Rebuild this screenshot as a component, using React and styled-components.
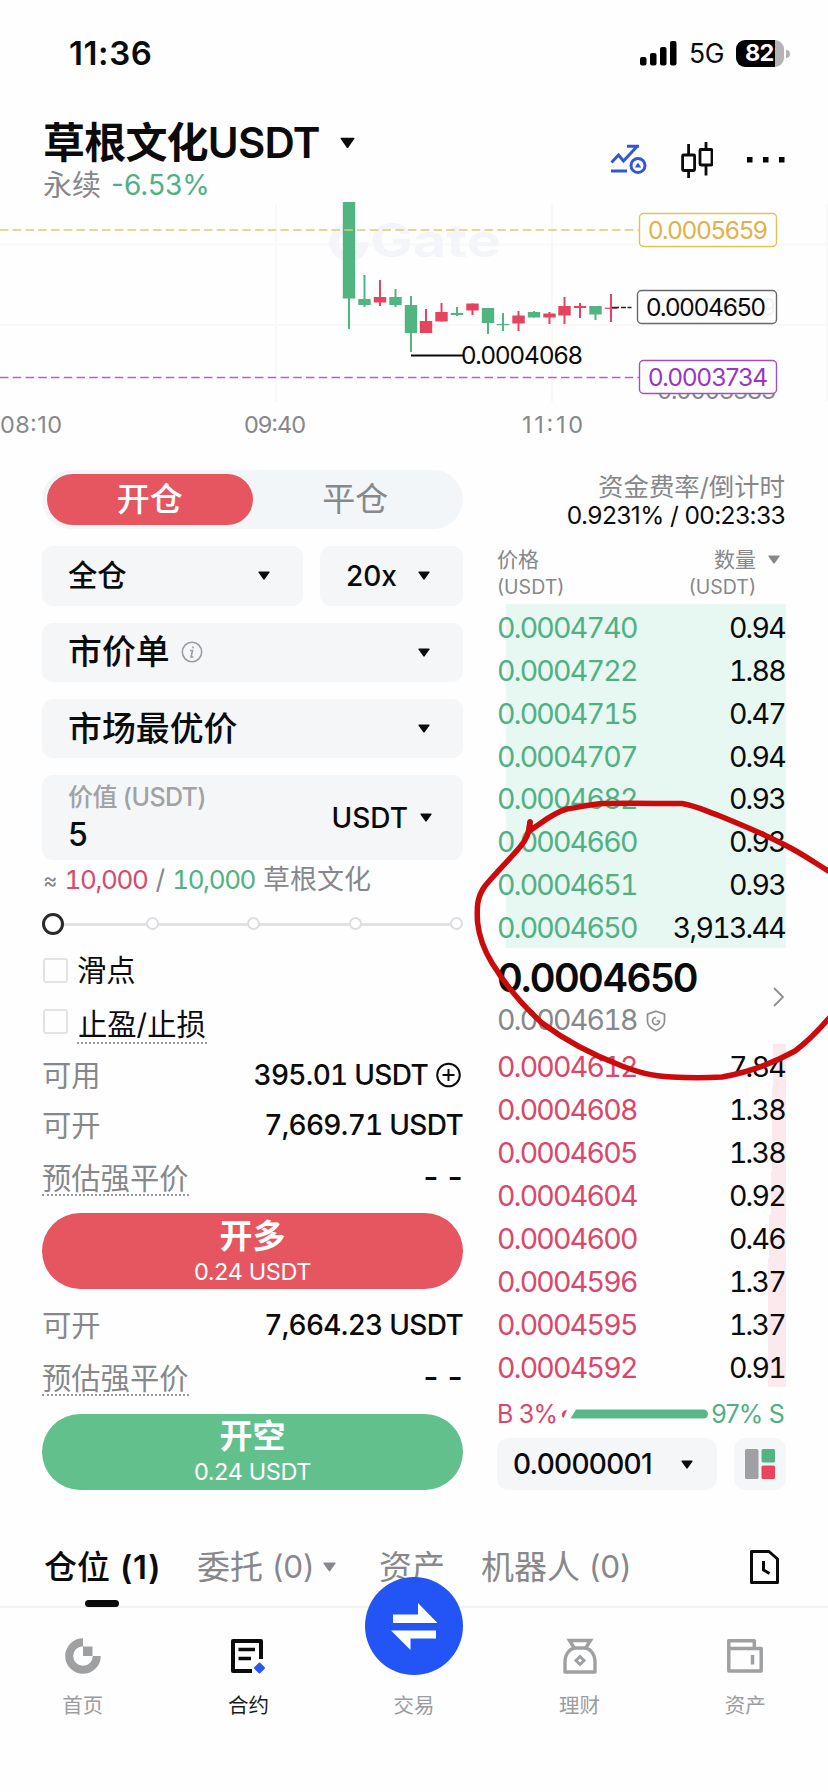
import React from "react";
import styled, { createGlobalStyle } from "styled-components";

const GlobalStyle = createGlobalStyle`
  * {
    box-sizing: border-box;
  }
  body {
    margin: 0;
    background: #fefefe;
    color: #0b0b0c;
    font-family: Inter, "Noto Sans CJK SC", sans-serif;
    line-height: 1;
    white-space: nowrap;
  }
  svg {
    display: block;
    flex: none;
  }
`;

const RED = "#d9486a";
const GREEN = "#4fb183";
const GRAY = "#86888b";

const Screen = styled.div`
  position: relative;
  width: 828px;
  height: 1792px;
  overflow: hidden;
  display: flex;
  flex-direction: column;
`;

const StatusBar = styled.div`
  height: 106px;
  padding: 0 38px 0 69px;
  display: flex;
  align-items: center;
  justify-content: space-between;

  .time {
    font-size: 33px;
    font-weight: 600;
    letter-spacing: 0.6px;
  }
  .right {
    display: flex;
    align-items: center;
    gap: 12px;
  }
  .network {
    font-size: 26.5px;
    letter-spacing: -0.5px;
  }
`;

const Battery = styled.div`
  position: relative;
  width: 48px;
  height: 27px;
  margin-right: 6px;
  padding-left: 9px;
  border-radius: 9px;
  display: flex;
  align-items: center;
  background: linear-gradient(to right, #000 82%, #b4b4b4 82%);
  color: #fff;
  font-size: 23.5px;
  font-weight: 700;
  letter-spacing: -0.8px;

  &::after {
    content: "";
    position: absolute;
    right: -6px;
    top: 10px;
    width: 4px;
    height: 8px;
    border-radius: 0 4px 4px 0;
    background: #b4b4b4;
  }
`;

const Header = styled.header`
  height: 96px;
  padding: 14px 43px 0;
  display: flex;
  justify-content: space-between;

  .title {
    display: flex;
    align-items: center;
    height: 46px;
    font-size: 42px;
    font-weight: 600;
    letter-spacing: -0.8px;
  }
  .title svg {
    margin-left: 20px;
  }
  .sub {
    display: flex;
    align-items: center;
    height: 38px;
    gap: 10px;
    font-size: 29px;
    color: ${GRAY};
  }
  .sub b {
    font-weight: 400;
    font-size: 28px;
    color: ${GREEN};
  }
  .actions {
    display: flex;
    align-items: center;
    height: 80px;
    gap: 34px;
  }
`;

const Chart = styled.div`
  height: 268px;

  text {
    font-family: Inter, sans-serif;
  }
`;

const Trade = styled.main`
  height: 1048px;
  padding: 0 42px;
  display: flex;
  justify-content: space-between;
`;

const OrderForm = styled.section`
  width: 421px;
`;

const Fields = styled.div`
  display: flex;
  flex-direction: column;
  gap: 17px;
`;

const Segment = styled.div`
  height: 59.3px;
  padding: 4px 5px;
  border-radius: 30px;
  background: #f3f6f8;
  display: flex;
`;

const SegmentItem = styled.div`
  flex: 1;
  border-radius: 26px;
  display: flex;
  align-items: center;
  justify-content: center;
  font-size: 33px;
  color: ${(p) => (p.$active ? "#fff" : GRAY)};
  background: ${(p) => (p.$active ? "#e55661" : "transparent")};
  font-weight: ${(p) => (p.$active ? 500 : 400)};
`;

const FieldRow = styled.div`
  display: flex;
  gap: 17px;
`;

const Select = styled.div`
  height: ${(p) => p.$height || 59.3}px;
  width: ${(p) => (p.$width ? `${p.$width}px` : "100%")};
  padding: 0 33px 0 26px;
  border-radius: 11px;
  background: #f4f6f8;
  display: flex;
  align-items: center;
  justify-content: space-between;
  font-size: ${(p) => p.$size || 33.9}px;
  font-weight: 500;

  .label {
    display: flex;
    align-items: center;
    gap: 11px;
  }
`;

const Amount = styled.div`
  display: flex;
  flex-direction: column;
  gap: 9px;
  font-size: 32px;

  small {
    font-size: 25px;
    color: #a0a2a4;
    letter-spacing: -0.6px;
  }
`;

const Unit = styled.div`
  display: flex;
  align-items: center;
  gap: 12px;
  font-size: 28px;
  margin: 0 -2px 0 0;
`;

const Estimate = styled.div`
  height: 38.5px;
  padding: 1px 0 0 1px;
  display: flex;
  align-items: center;
  font-size: 27px;
  color: ${GRAY};

  .approx {
    font-size: 22px;
  }
  .num {
    font-size: 26px;
    letter-spacing: -1.4px;
    font-variant-numeric: tabular-nums;
  }
  .red {
    color: ${RED};
    margin: 0 8px 0 7px;
  }
  .green {
    color: ${GREEN};
    margin: 0 8px 0 7px;
  }
`;

const Slider = styled.div`
  position: relative;
  height: 50.5px;
  display: flex;
  align-items: center;
  justify-content: space-between;

  &::before {
    content: "";
    position: absolute;
    left: 20px;
    right: 10px;
    top: 24px;
    height: 3px;
    background: #e1e2e4;
  }
`;

const Stop = styled.i`
  position: relative;
  width: ${(p) => (p.$current ? 22 : 13)}px;
  height: ${(p) => (p.$current ? 22 : 13)}px;
  margin-right: ${(p) => (p.$current ? -7 : 0)}px;
  border: ${(p) => (p.$current ? "3px solid #28292b" : "2px solid #dcdde0")};
  border-radius: 50%;
  background: #fff;
`;

const Check = styled.div`
  height: ${(p) => p.$height}px;
  padding-left: 1px;
  display: flex;
  align-items: center;
  gap: 9px;
  font-size: 29.3px;

  i {
    width: 25px;
    height: 25px;
    border: 2px solid #e2e3e5;
    border-radius: 3px;
  }
`;

const Dotted = styled.span`
  padding: ${(p) => p.$pad || "11px 1px 3px"};
  border-bottom: 2px dotted #97999c;
`;

const Info = styled.div`
  height: ${(p) => p.$height || 50}px;
  display: flex;
  align-items: center;
  justify-content: space-between;
  font-size: 29.3px;
  color: ${GRAY};

  b {
    display: flex;
    align-items: center;
    gap: 8px;
    color: #0b0b0c;
    font-size: 28px;
    font-weight: 500;
    letter-spacing: -0.7px;
    font-variant-numeric: tabular-nums;
  }
  .empty {
    font-size: 33px;
    letter-spacing: -3px;
  }
`;

const Submit = styled.button`
  width: 100%;
  height: 76px;
  margin: 8.3px 0 11px;
  padding: 3px 0 0;
  border: 0;
  border-radius: 38px;
  background: ${(p) => (p.$long ? "#e55661" : "#62c08d")};
  color: #fff;
  font-family: inherit;
  font-size: 33px;
  font-weight: 700;
  display: flex;
  flex-direction: column;
  align-items: center;
  justify-content: center;
  line-height: 38px;

  small {
    font-size: 23.5px;
    font-weight: 400;
    letter-spacing: -0.4px;
    line-height: 34px;
  }
`;

const Book = styled.section`
  width: 289px;
`;

const Funding = styled.div`
  height: 68px;
  padding: 3px 1px 0 0;
  text-align: right;
  font-size: 25.4px;
  line-height: 28px;
  color: ${GRAY};

  div {
    color: #0b0b0c;
    font-size: 24.5px;
    letter-spacing: -0.6px;
  }
`;

const BookHead = styled.div`
  height: 66px;
  padding: 9px 6px 0 0;
  display: flex;
  justify-content: space-between;
  font-size: 21px;
  line-height: 26px;
  color: ${GRAY};

  small {
    font-size: 19.5px;
    line-height: 28px;
  }
  .col {
    display: flex;
    flex-direction: column;
  }
  .qty {
    display: flex;
    gap: 12px;
  }
  .qty .col {
    align-items: flex-end;
  }
  .qty svg {
    margin-top: 8px;
  }
`;

const Level = styled.div`
  height: 42.95px;
  padding: 5px 1px 0 0;
  display: flex;
  align-items: center;
  justify-content: space-between;
  font-size: 28.5px;
  letter-spacing: -1.75px;
  font-variant-numeric: tabular-nums;
  background: linear-gradient(${(p) => p.$fill}, ${(p) => p.$fill}) no-repeat
    right / ${(p) => p.$depth}px 100%;

  span:first-child {
    color: ${(p) => p.$color};
  }
`;

const LastPrice = styled.div`
  height: 96px;
  padding: 8px 2px 0 0;
  display: flex;
  align-items: center;
  justify-content: space-between;

  strong {
    display: block;
    font-size: 39px;
    font-weight: 600;
    line-height: 42px;
    letter-spacing: -1.6px;
  }
  .mark {
    display: flex;
    align-items: center;
    gap: 9px;
    height: 43px;
    font-size: 28.5px;
    letter-spacing: -1.75px;
    font-variant-numeric: tabular-nums;
    color: ${GRAY};
  }
  .more {
    margin-bottom: 6px;
  }
`;

const Ratio = styled.div`
  height: 51px;
  padding: 3px 2px 0 0;
  display: flex;
  align-items: center;
  justify-content: space-between;
  font-size: 25px;
  letter-spacing: -0.8px;
  color: ${GREEN};

  .buy {
    color: ${RED};
  }
`;

const BookFoot = styled.div`
  display: flex;
  justify-content: space-between;
`;

const Precision = styled.div`
  width: 220px;
  height: 52px;
  padding: 0 24px 0 16px;
  border-radius: 12px;
  background: #f4f6f8;
  display: flex;
  align-items: center;
  justify-content: space-between;
  font-size: 28px;
  font-weight: 500;
  letter-spacing: -0.7px;
`;

const BookMode = styled.div`
  width: 52px;
  height: 52px;
  border-radius: 12px;
  background: #f4f6f8;
  display: flex;
  align-items: center;
  justify-content: center;
`;

const Tabs = styled.nav`
  height: 90px;
  padding: 0 49px 0 44px;
  display: flex;
  align-items: flex-start;
  border-bottom: 2px solid #f1f2f3;
`;

const Tab = styled.div`
  position: relative;
  height: 90px;
  width: ${(p) => p.$width}px;
  padding-top: 8px;
  display: flex;
  align-items: center;
  gap: ${(p) => (p.$active ? 10 : 9)}px;
  font-size: 33px;
  font-weight: ${(p) => (p.$active ? 500 : 400)};
  color: ${(p) => (p.$active ? "#0b0b0c" : GRAY)};

  span {
    font-size: ${(p) => (p.$active ? 33 : 31.5)}px;
    font-weight: ${(p) => (p.$active ? 600 : 400)};
    letter-spacing: ${(p) => (p.$active ? 0.8 : -0.2)}px;
  }

  &::after {
    content: "";
    display: ${(p) => (p.$active ? "block" : "none")};
    position: absolute;
    left: 41px;
    bottom: 1px;
    width: 34px;
    height: 7px;
    border-radius: 4px;
    background: #0b0b0c;
  }
`;

const TabBar = styled.footer`
  height: 184px;
  display: flex;
`;

const TabBarItem = styled.div`
  flex: 1;
  display: flex;
  flex-direction: column;
  align-items: center;
  padding-top: 28px;
  font-size: 20.5px;
  color: ${(p) => (p.$active ? "#1b1c1e" : "#9b9c9e")};

  .icon {
    height: 40px;
    display: flex;
    align-items: center;
    margin-bottom: 20px;
  }
`;

const TradeButton = styled.div`
  width: 98px;
  height: 98px;
  margin: -59px 0 21px;
  z-index: 1;
  border-radius: 50%;
  background: #2354f5;
`;

const Scribble = styled.svg`
  position: absolute;
  left: 470px;
  top: 790px;
  z-index: 2;
  pointer-events: none;
`;

const Caret = ({ color = "#0b0b0c", width = 12 }) => (
  <svg width={width} height={width * 0.75} viewBox="0 0 12 9">
    <path d="M1 .5h10q1 0 .5.9L6.7 8.3q-.7.9-1.4 0L.5 1.4Q0 .5 1 .5z" fill={color} />
  </svg>
);

// x, wick top, wick bottom, body top, body bottom, rising
const candles = [
  [349, 202, 329, 202, 298.5, 0],
  [364.5, 275, 307, 299, 305, 0],
  [380, 280, 306, 297, 302.5, 1],
  [395.5, 289, 307, 297, 305, 0],
  [411, 296, 352, 305, 333, 0],
  [426, 309, 333, 321, 333, 1],
  [441.5, 303, 321.5, 312, 321.5, 1],
  [457, 307, 316, 313, 315, 0],
  [472.5, 303.5, 315, 303.5, 310.5, 1],
  [488, 308, 334, 308, 323, 0],
  [503, 313, 331, 324, 325.2, 0],
  [518.5, 311, 331, 315.5, 323.5, 1],
  [534, 311, 317.5, 312, 317.5, 0],
  [549.5, 312, 324, 313.5, 317.5, 1],
  [564.5, 297, 324, 306, 315.5, 1],
  [580, 303, 318, 306, 308, 1],
  [595.5, 306, 320, 306, 314.5, 0],
  [611, 294, 322, 307.7, 308.9, 1],
];

const PriceTag = ({ x, y, color, stroke, children, opacity = 1 }) => (
  <g>
    <rect x={x} y={y} width={776.5 - x} height="33" rx="4" fill="#fff" fillOpacity={opacity} stroke={stroke} strokeWidth="1.4" />
    <text x={x + 8.5} y={y + 25.5} fontSize="24.5" fill={color} textLength="120" lengthAdjust="spacing">
      {children}
    </text>
  </g>
);

const PriceChart = () => (
  <Chart>
    <svg width="828" height="268" viewBox="0 202 828 268">
      <g stroke="#f8f8f9" strokeWidth="2">
        <path d="M276 204V402M552 204V402M827 204V402M0 244.5H828M0 325H828" />
      </g>
      <path d="M349 227a15 15 0 1 0 15 15" fill="none" stroke="#f4f5f8" strokeWidth="9" />
      <text x="370" y="257" fontSize="46" fontWeight="700" fill="#f4f5f8" textLength="131" lengthAdjust="spacingAndGlyphs">
        Gate
      </text>
      {candles.map(([x, high, low, top, bottom, up]) => (
        <g key={x} fill={up ? "#e5445f" : "#50b580"}>
          <rect x={x - 1} y={high} width="2" height={low - high} />
          <rect x={x - 6.2} y={top} width="12.4" height={bottom - top} />
        </g>
      ))}
      <path d="M0 230H639" stroke="#dccb78" strokeWidth="1.6" strokeDasharray="8.5 4.25" />
      <path d="M0 377.5H639" stroke="#b45fd6" strokeWidth="1.6" strokeDasharray="8.5 4.25" />
      <path d="M612 307.5h7m2 0h5m1.5 0h4" stroke="#222" strokeWidth="1.3" />
      <path d="M411 355.5h52" stroke="#0b0b0c" strokeWidth="2" />
      <text x="461" y="364" fontSize="24.5" textLength="122" fill="#0b0b0c">0.0004068</text>
      <text x="657" y="316" fontSize="24" fill="#a5a7aa" textLength="119">0.0004529</text>
      <text x="657" y="399" fontSize="24" fill={GRAY} textLength="119">0.0003383</text>
      <PriceTag x={639.5} y={213.5} color="#e3b04a" stroke="#e2c250">0.0005659</PriceTag>
      <PriceTag x={637.5} y={290.5} color="#0b0b0c" stroke="#66686b" opacity={0.85}>0.0004650</PriceTag>
      <PriceTag x={639.5} y={360.5} color="#9a35c4" stroke="#a04fc8">0.0003734</PriceTag>
      <g fontSize="23.5" fill={GRAY}>
        <text x="0" y="432.5" textLength="62">08:10</text>
        <text x="244" y="432.5" textLength="62">09:40</text>
        <text x="522" y="432.5" textLength="61">11:10</text>
      </g>
    </svg>
  </Chart>
);

const asks = [
  ["0.0004740", "0.94"],
  ["0.0004722", "1.88"],
  ["0.0004715", "0.47"],
  ["0.0004707", "0.94"],
  ["0.0004682", "0.93"],
  ["0.0004660", "0.93"],
  ["0.0004651", "0.93"],
  ["0.0004650", "3,913.44"],
];

const bids = [
  ["0.0004612", "7.84", 13],
  ["0.0004608", "1.38", 14],
  ["0.0004605", "1.38", 14],
  ["0.0004604", "0.92", 15],
  ["0.0004600", "0.46", 17],
  ["0.0004596", "1.37", 18],
  ["0.0004595", "1.37", 18],
  ["0.0004592", "0.91", 18],
];

const OpenSide = ({ long, max, label }) => (
  <>
    <Info>
      可开<b>{max} USDT</b>
    </Info>
    <Info $height={55}>
      <Dotted $pad="4px 1px 1px 0">预估强平价</Dotted>
      <b className="empty">- -</b>
    </Info>
    <Submit $long={long}>
      {label}
      <small>0.24 USDT</small>
    </Submit>
  </>
);

const App = () => (
  <Screen>
    <GlobalStyle />
    <StatusBar>
      <span className="time">11:36</span>
      <div className="right">
        <svg width="37" height="25" viewBox="0 0 37 25">
          <rect x="0" y="16" width="6.5" height="8.5" rx="2" />
          <rect x="10" y="12" width="6.5" height="12.5" rx="2" />
          <rect x="20" y="6" width="6.5" height="18.5" rx="2" />
          <rect x="30" y="0" width="6.5" height="24.5" rx="2" />
        </svg>
        <span className="network">5G</span>
        <Battery>82</Battery>
      </div>
    </StatusBar>

    <Header>
      <div>
        <div className="title">
          草根文化USDT
          <Caret width={15} />
        </div>
        <div className="sub">
          永续 <b>-6.53%</b>
        </div>
      </div>
      <div className="actions">
        <svg width="37" height="32" viewBox="0 0 37 32" fill="none" stroke="#3156d8" strokeWidth="3">
          <path d="M1.5 18.5L8.5 11l5 6L27 2.5M17 2.2h12M1 27h16" />
          <circle cx="28" cy="21.5" r="7" />
          <path d="M28 18.5l3.2 5h-6.4z" fill="#3156d8" stroke="none" />
        </svg>
        <svg width="32" height="36" viewBox="0 0 32 36" fill="none" stroke="#0b0b0c" strokeWidth="2.8">
          <rect x="1.6" y="13" width="12" height="15.5" rx="1" />
          <path d="M7.6 2v11m0 15.5V36M25 0v7.5m0 15.5v10.5" />
          <rect x="19" y="7.5" width="12" height="15.5" rx="1" />
        </svg>
        <svg width="38" height="6" viewBox="0 0 38 6">
          <path d="M0 0h5.5v5.5H0zM16 0h5.5v5.5H16zM32 0h5.5v5.5H32z" />
        </svg>
      </div>
    </Header>

    <PriceChart />

    <Trade>
      <OrderForm>
        <Fields>
          <Segment>
            <SegmentItem $active>开仓</SegmentItem>
            <SegmentItem>平仓</SegmentItem>
          </Segment>
          <FieldRow>
            <Select $width={261} $size={29.3}>
              全仓 <Caret />
            </Select>
            <Select $width={143} $size={28}>
              20x <Caret />
            </Select>
          </FieldRow>
          <Select>
            <span className="label">
              市价单
              <svg width="22" height="22" viewBox="0 0 22 22" fill="none" stroke="#9b9da0" strokeWidth="1.6">
                <circle cx="11" cy="11" r="9.7" />
                <path d="M9 9.5h2.6L10 16h2.5M12 5.5v1.8" />
              </svg>
            </span>
            <Caret />
          </Select>
          <Select>
            市场最优价 <Caret />
          </Select>
          <Select $height={85}>
            <Amount>
              <small>价值 (USDT)</small>5
            </Amount>
            <Unit>
              USDT <Caret />
            </Unit>
          </Select>
        </Fields>

        <Estimate>
          <span className="approx">≈</span>
          <span className="num red">10,000</span>/
          <span className="num green">10,000</span>草根文化
        </Estimate>
        <Slider>
          <Stop $current />
          <Stop />
          <Stop />
          <Stop />
          <Stop />
        </Slider>
        <Check $height={43}>
          <i />
          <span>滑点</span>
        </Check>
        <Check $height={58}>
          <i />
          <Dotted>止盈/止损</Dotted>
        </Check>
        <Info>
          可用
          <b>
            395.01 USDT
            <svg width="27" height="26" viewBox="0 0 27 26" fill="none" stroke="#0b0b0c" strokeWidth="2">
              <circle cx="12.5" cy="13" r="11.3" />
              <path d="M6.5 13h12M12.5 7v12" />
            </svg>
          </b>
        </Info>
        <OpenSide long max="7,669.71" label="开多" />
        <OpenSide max="7,664.23" label="开空" />
      </OrderForm>

      <Book>
        <Funding>
          资金费率/倒计时
          <div>0.9231% / 00:23:33</div>
        </Funding>
        <BookHead>
          <div className="col">
            价格
            <small>(USDT)</small>
          </div>
          <div className="qty">
            <div className="col">
              数量
              <small>(USDT)</small>
            </div>
            <Caret color={GRAY} />
          </div>
        </BookHead>
        {asks.map(([price, qty]) => (
          <Level key={price} $color={GREEN} $fill="#e7f7f1" $depth={280}>
            <span>{price}</span>
            <span>{qty}</span>
          </Level>
        ))}
        <LastPrice>
          <div>
            <strong>0.0004650</strong>
            <div className="mark">
              0.0004618
              <svg width="20" height="22" viewBox="0 0 20 22" fill="none" stroke="#8d8f92" strokeWidth="1.7">
                <path d="M10 1.2l8.5 3v7.3c0 4-3.5 7-8.5 9.2-5-2.2-8.5-5.2-8.5-9.2V4.2z" />
                <path d="M10 7.5a3.5 3.5 0 1 0 3.500 3.500H10.500" />
              </svg>
            </div>
          </div>
          <svg className="more" width="11" height="20" viewBox="0 0 11 20" fill="none" stroke="#8d8f92" strokeWidth="1.8">
            <path d="M1 1l9 9-9 9" />
          </svg>
        </LastPrice>
        {bids.map(([price, qty, depth]) => (
          <Level key={price} $color={RED} $fill="#fce9ed" $depth={depth}>
            <span>{price}</span>
            <span>{qty}</span>
          </Level>
        ))}
        <Ratio>
          <span className="buy">B 3%</span>
          <svg width="147" height="10" viewBox="0 0 147 10">
            <path d="M6 1L2.5 9C-.5 8 .5 1 6 1z" fill={RED} />
            <path d="M15 .5h127.5a4.3 4.3 0 0 1 0 9H9.5z" fill="#5ab786" />
          </svg>
          <span>97% S</span>
        </Ratio>
        <BookFoot>
          <Precision>
            0.0000001 <Caret />
          </Precision>
          <BookMode>
            <svg width="30" height="30" viewBox="0 0 30 30">
              <rect width="13.5" height="30" rx="1.5" fill="#9fa0a4" />
              <rect x="16.5" width="13.5" height="13.5" rx="1.5" fill="#50b580" />
              <rect x="16.5" y="16.5" width="13.5" height="13.5" rx="1.5" fill="#ea4460" />
            </svg>
          </BookMode>
        </BookFoot>
      </Book>
    </Trade>

    <Tabs>
      <Tab $active $width={153}>
        仓位 <span>(1)</span>
      </Tab>
      <Tab $width={182}>
        委托 <span>(0)</span>
        <Caret color={GRAY} width={13} />
      </Tab>
      <Tab $width={102}>资产</Tab>
      <Tab $width={269}>
        机器人 <span>(0)</span>
      </Tab>
      <Tab>
        <svg width="29" height="34" viewBox="0 0 29 34" fill="none" stroke="#0b0b0c" strokeWidth="3">
          <path d="M1.5 1.5H19l8.5 7.5v23.5h-26z" strokeLinejoin="round" />
          <path d="M13.5 11v9l6 3.5" />
        </svg>
      </Tab>
    </Tabs>

    <TabBar>
      <TabBarItem>
        <div className="icon">
          <svg width="36" height="36" viewBox="0 0 36 36">
            <path d="M18 4.2A13.8 13.8 0 1 0 31.8 18" fill="none" stroke="#9fa0a2" strokeWidth="8" />
            <path d="M18 8.5h9.5V18H18z" fill="#9fa0a2" />
          </svg>
        </div>
        首页
      </TabBarItem>
      <TabBarItem $active>
        <div className="icon">
          <svg width="36" height="36" viewBox="0 0 36 36" fill="none" stroke="#0b0b0c" strokeWidth="4">
            <path d="M31 21V3H3v30h19" strokeLinejoin="round" />
            <path d="M8.5 11.5H25M8.5 20.5H21" strokeWidth="3.5" />
            <path d="M29.5 25.5l4.5 4.5-4.5 4.5-4.5-4.5z" fill="#2a57ee" stroke="#2a57ee" strokeWidth="2" strokeLinejoin="round" />
          </svg>
        </div>
        合约
      </TabBarItem>
      <TabBarItem>
        <TradeButton>
          <svg width="98" height="98" viewBox="0 0 98 98" fill="#fff">
            <path d="M28 37.5h25V26l19.5 20H28zM71 61.5H45.5V73L26 53.5h45z" />
          </svg>
        </TradeButton>
        交易
      </TabBarItem>
      <TabBarItem>
        <div className="icon">
          <svg width="34" height="36" viewBox="0 0 34 36" fill="none" stroke="#9fa0a2" strokeWidth="3.4">
            <path d="M11 9.5L6.5 2.5h21L23 9.5" />
            <path d="M2 34V24c0-8 5-14 11-14h8c6 0 11 6 11 14v10z" strokeLinejoin="round" />
            <path d="M17 18.5l4 4-4 4-4-4z" strokeWidth="3" />
          </svg>
        </div>
        理财
      </TabBarItem>
      <TabBarItem>
        <div className="icon">
          <svg width="36" height="34" viewBox="0 0 36 34" fill="none" stroke="#9fa0a2" strokeWidth="3.5">
            <path d="M1.8 32V1.8h25.5v7M1.8 9.5h32.4v22.5H1.8z" strokeLinejoin="round" />
            <path d="M25.5 16v9.5" />
          </svg>
        </div>
        资产
      </TabBarItem>
    </TabBar>

    <Scribble width="358" height="300" viewBox="470 790 358 300" fill="none" stroke="#cb0a0c" strokeWidth="5.5" strokeLinecap="round" strokeLinejoin="round">
      <path d="M530 822L529 831C542 823 552 813 567 809C580 807 592 804 604 803.5C630 803 655 803.5 682 803.5C694 805 706 811 720 816C742 825 764 834 785 845C803 854 815 863 830 872" />
      <path d="M530 822C529 834 526 840 520 847C508 861 496 873 485 886C476 898 477 910 477.5 922C479 936 484 950 492 963C503 981 520 1003 542 1023C562 1038 590 1054 622 1066C638 1072 650 1076 672 1077C690 1078 705 1078 722 1077C745 1073 770 1065 795 1051C807 1042 818 1031 830 1017" />
    </Scribble>
  </Screen>
);

export default App;
